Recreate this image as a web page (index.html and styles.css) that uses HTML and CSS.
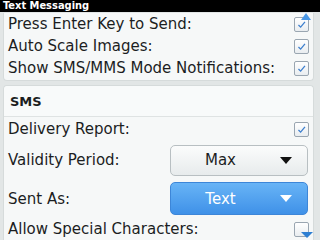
FILE: index.html
```html
<!DOCTYPE html>
<html>
<head>
<meta charset="utf-8">
<link rel="stylesheet" href="styles.css">
</head>
<body>
<div class="titlebar">Text Messaging</div>
<div class="panel panel-top">
  <div class="row"><span class="label">Press Enter Key to Send:</span><span class="check on"><svg viewBox="0 0 15 15"><path d="M4 8 L6.5 10.5 L11.5 4.5" /></svg></span></div>
  <div class="row"><span class="label">Auto Scale Images:</span><span class="check on"><svg viewBox="0 0 15 15"><path d="M4 8 L6.5 10.5 L11.5 4.5" /></svg></span></div>
  <div class="row"><span class="label">Show SMS/MMS Mode Notifications:</span><span class="check on"><svg viewBox="0 0 15 15"><path d="M4 8 L6.5 10.5 L11.5 4.5" /></svg></span></div>
</div>
<div class="panel panel-sms">
  <div class="header">SMS</div>
  <div class="row row-first"><span class="label">Delivery Report:</span><span class="check on"><svg viewBox="0 0 15 15"><path d="M4 8 L6.5 10.5 L11.5 4.5" /></svg></span></div>
  <div class="row row-tall"><span class="label">Validity Period:</span><span class="drop"><span class="drop-text">Max</span><span class="tri"></span></span></div>
  <div class="row row-tall row-sent"><span class="label">Sent As:</span><span class="drop drop-blue"><span class="drop-text">Text</span><span class="tri"></span></span></div>
  <div class="row"><span class="label">Allow Special Characters:</span><span class="check"></span></div>
</div>
<div class="scroll-up"></div>
<div class="scroll-down"></div>
</body>
</html>
```
FILE: styles.css
```css
html, body {
  margin: 0;
  padding: 0;
}
body {
  width: 320px;
  height: 240px;
  overflow: hidden;
  background: #e2e6e6;
  font-family: "DejaVu Sans", sans-serif;
  color: #1c1e1f;
  position: relative;
}
.titlebar {
  height: 12px;
  background: #000;
  color: #fff;
  font-family: "DejaVu Sans Condensed", "DejaVu Sans", sans-serif;
  font-weight: bold;
  font-size: 11px;
  line-height: 11px;
  padding-left: 3px;
  font-stretch: condensed;
}
.panel {
  background: #f6f8f8;
  margin: 0 6px 0 3px;
  border: 1px solid #d6dbdb;
}
.panel-top {
  border-top: none;
  border-radius: 0 0 4px 4px;
  height: 67px;
}
.panel-sms {
  margin-top: 4px;
  border-radius: 4px 4px 0 0;
  border-bottom: none;
}
.row {
  height: 22px;
  display: flex;
  align-items: center;
  justify-content: space-between;
  padding: 0 4px 0 4px;
}
.panel-top .row:first-child {
  margin-top: 1px;
}
.row-first {
  height: 24px;
}
.label {
  font-size: 15px;
  white-space: nowrap;
}
.check {
  width: 13px;
  height: 13px;
  border: 1px solid #9aa6b1;
  border-radius: 2px;
  background: linear-gradient(#ffffff, #e9edf0);
  display: flex;
}
.check svg {
  width: 13px;
  height: 13px;
  fill: none;
  stroke: #3d7fce;
  stroke-width: 1.5;
}
.header {
  height: 30px;
  border-bottom: 1px solid #dfe3e3;
  background: #f8fafa;
  font-weight: bold;
  font-size: 13px;
  display: flex;
  align-items: center;
  padding-left: 6px;
  border-radius: 4px 4px 0 0;
}
.row-tall {
  height: 38px;
}
.row-sent {
  height: 39px;
}
.drop {
  width: 136px;
  height: 29px;
  border: 1px solid #b8bfc2;
  border-radius: 5px;
  background: linear-gradient(#fbfcfc, #e7ebec);
  display: flex;
  align-items: center;
  position: relative;
  margin-right: 1px;
}
.drop-text {
  flex: 1;
  text-align: center;
  font-size: 15px;
  padding-right: 10px;
}
.tri {
  width: 0;
  height: 0;
  border-left: 6px solid transparent;
  border-right: 6px solid transparent;
  border-top: 7px solid #111;
  margin-right: 15px;
}
.drop-blue {
  height: 31px;
  border-color: #3d86d8;
  background: linear-gradient(#68b4f6, #3f91e8);
  color: #fff;
}
.drop-blue .tri {
  border-top-color: #fff;
}
.scroll-up {
  position: absolute;
  left: 301px;
  top: 13px;
  width: 0;
  height: 0;
  border-left: 5.5px solid transparent;
  border-right: 5.5px solid transparent;
  border-bottom: 7px solid #4a98e6;
}
.scroll-down {
  position: absolute;
  left: 301px;
  top: 232px;
  width: 0;
  height: 0;
  border-left: 6px solid transparent;
  border-right: 6px solid transparent;
  border-top: 6px solid #2e7fd2;
}
```
